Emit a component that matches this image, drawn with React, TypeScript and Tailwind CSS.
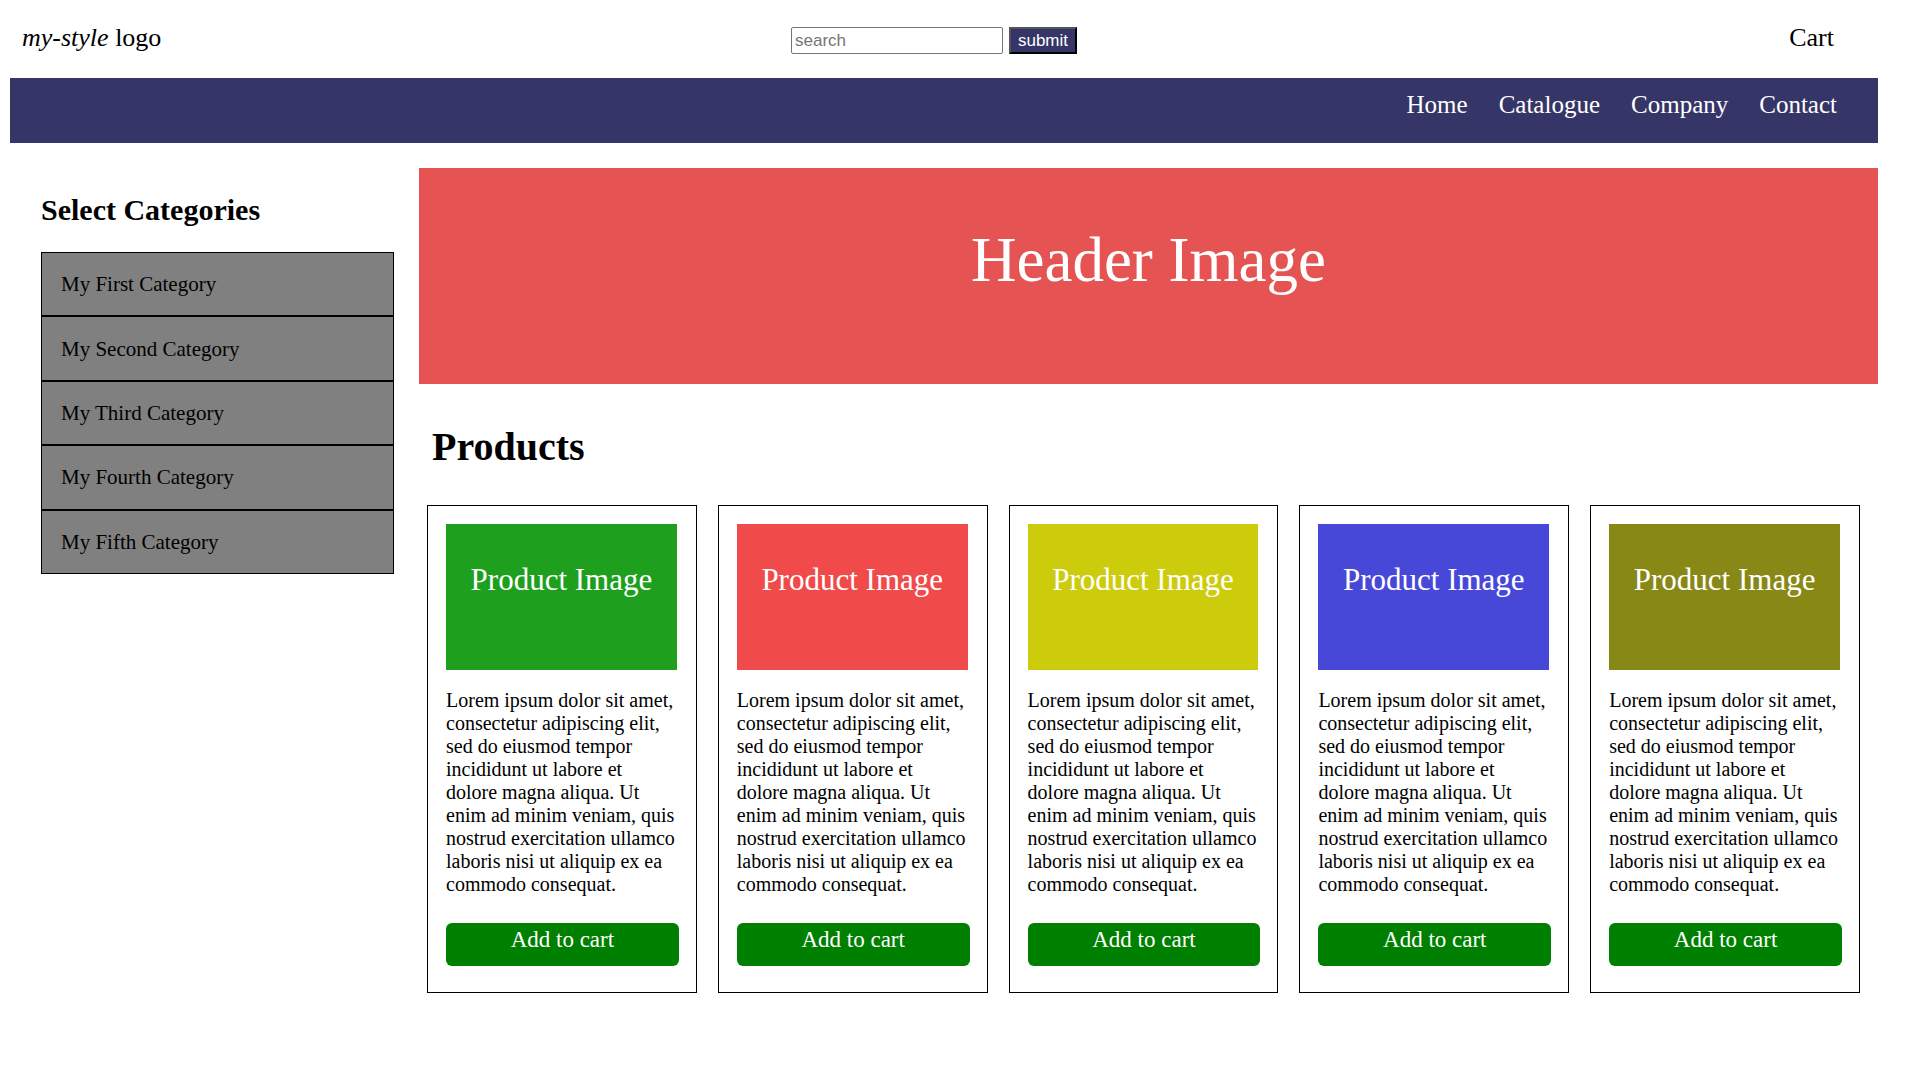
const links = ["Home", "Catalogue", "Company", "Contact"];

const categories = [
  "My First Category",
  "My Second Category",
  "My Third Category",
  "My Fourth Category",
  "My Fifth Category",
];

const products = [
  { id: 1, color: "bg-[#1ea01e]" },
  { id: 2, color: "bg-[#f14a4a]" },
  { id: 3, color: "bg-[#cccc0c]" },
  { id: 4, color: "bg-[#4848d8]" },
  { id: 5, color: "bg-[#888817]" },
];

const description =
  "Lorem ipsum dolor sit amet, consectetur adipiscing elit, sed do eiusmod tempor incididunt ut labore et dolore magna aliqua. Ut enim ad minim veniam, quis nostrud exercitation ullamco laboris nisi ut aliquip ex ea commodo consequat.";

function TopBar() {
  return (
    <div className="grid grid-cols-[1fr_auto_1fr] items-start pt-[22px] pb-6 pr-8 pl-3 text-[26px] leading-8">
      <a href="#home">
        <i>my-style</i> logo
      </a>
      <form
        className="mt-[5px] flex gap-[6px] font-['Liberation_Sans',sans-serif] text-[17px] leading-5"
        onSubmit={(e) => e.preventDefault()}
      >
        <input
          type="text"
          aria-label="search"
          placeholder="search"
          className="h-[27px] w-[212px] rounded-[2px] border border-[#767676] bg-white px-[3px] placeholder:text-[#757575]"
        />
        <button
          type="submit"
          className="h-[27px] w-[68px] border-2 border-t-[#555] border-r-black border-b-black border-l-[#555] bg-[#363567] leading-[22px] text-white"
        >
          submit
        </button>
      </form>
      <a href="#cart" className="mr-3 justify-self-end">
        Cart
      </a>
    </div>
  );
}

function NavBar() {
  return (
    <nav className="flex justify-end gap-[31px] bg-[#363567] pt-3 pr-[41px] pb-[23px] text-[25px] leading-[30px] text-white">
      {links.map((link) => (
        <a key={link} href={"#" + link.toLowerCase()}>
          {link}
        </a>
      ))}
    </nav>
  );
}

function Sidebar() {
  return (
    <aside className="w-[353px] shrink-0 pt-[25px]">
      <h2 className="text-[30px] leading-[34px] font-bold">Select Categories</h2>
      <ul className="mt-[25px] grid min-h-[322px] auto-rows-fr text-[21px] leading-6">
        {categories.map((category) => (
          <li key={category} className="flex items-center border border-black bg-[#808080] px-[19px]">
            <a href="#catalogue">{category}</a>
          </li>
        ))}
      </ul>
    </aside>
  );
}

function ProductCard({ color }: { color: string }) {
  return (
    <li className="border border-black pt-[18px] pr-[17px] pb-[26px] pl-[18px]">
      <div
        className={`mr-[2px] min-h-[146px] pt-[38px] text-center text-[31px] leading-9 text-white ${color}`}
      >
        Product Image
      </div>
      <p className="mt-[19px] mr-[2px] text-xl leading-[23px]">{description}</p>
      <button
        type="button"
        className="mt-[27px] block w-full rounded-[6px] bg-[#008000] pt-1 pb-[13px] text-center text-[23px] leading-[26px] text-white"
      >
        Add to cart
      </button>
    </li>
  );
}

export default function App() {
  return (
    <div className="min-h-screen bg-white pr-[42px] pl-[10px] font-['Liberation_Serif',serif] text-black">
      <header>
        <TopBar />
        <NavBar />
      </header>
      <div className="mt-[25px] flex gap-[25px] pl-[31px]">
        <Sidebar />
        <main className="min-w-0 flex-1">
          <div className="min-h-[216px] bg-[#e55353] pt-14 text-center text-[63px] leading-[72px] text-white">
            Header Image
          </div>
          <h1 className="mt-10 ml-[13px] text-[40px] leading-[46px] font-bold">Products</h1>
          <ul className="mt-[35px] mr-[18px] ml-2 grid grid-cols-5 gap-[21px]">
            {products.map((product) => (
              <ProductCard key={product.id} color={product.color} />
            ))}
          </ul>
        </main>
      </div>
    </div>
  );
}
